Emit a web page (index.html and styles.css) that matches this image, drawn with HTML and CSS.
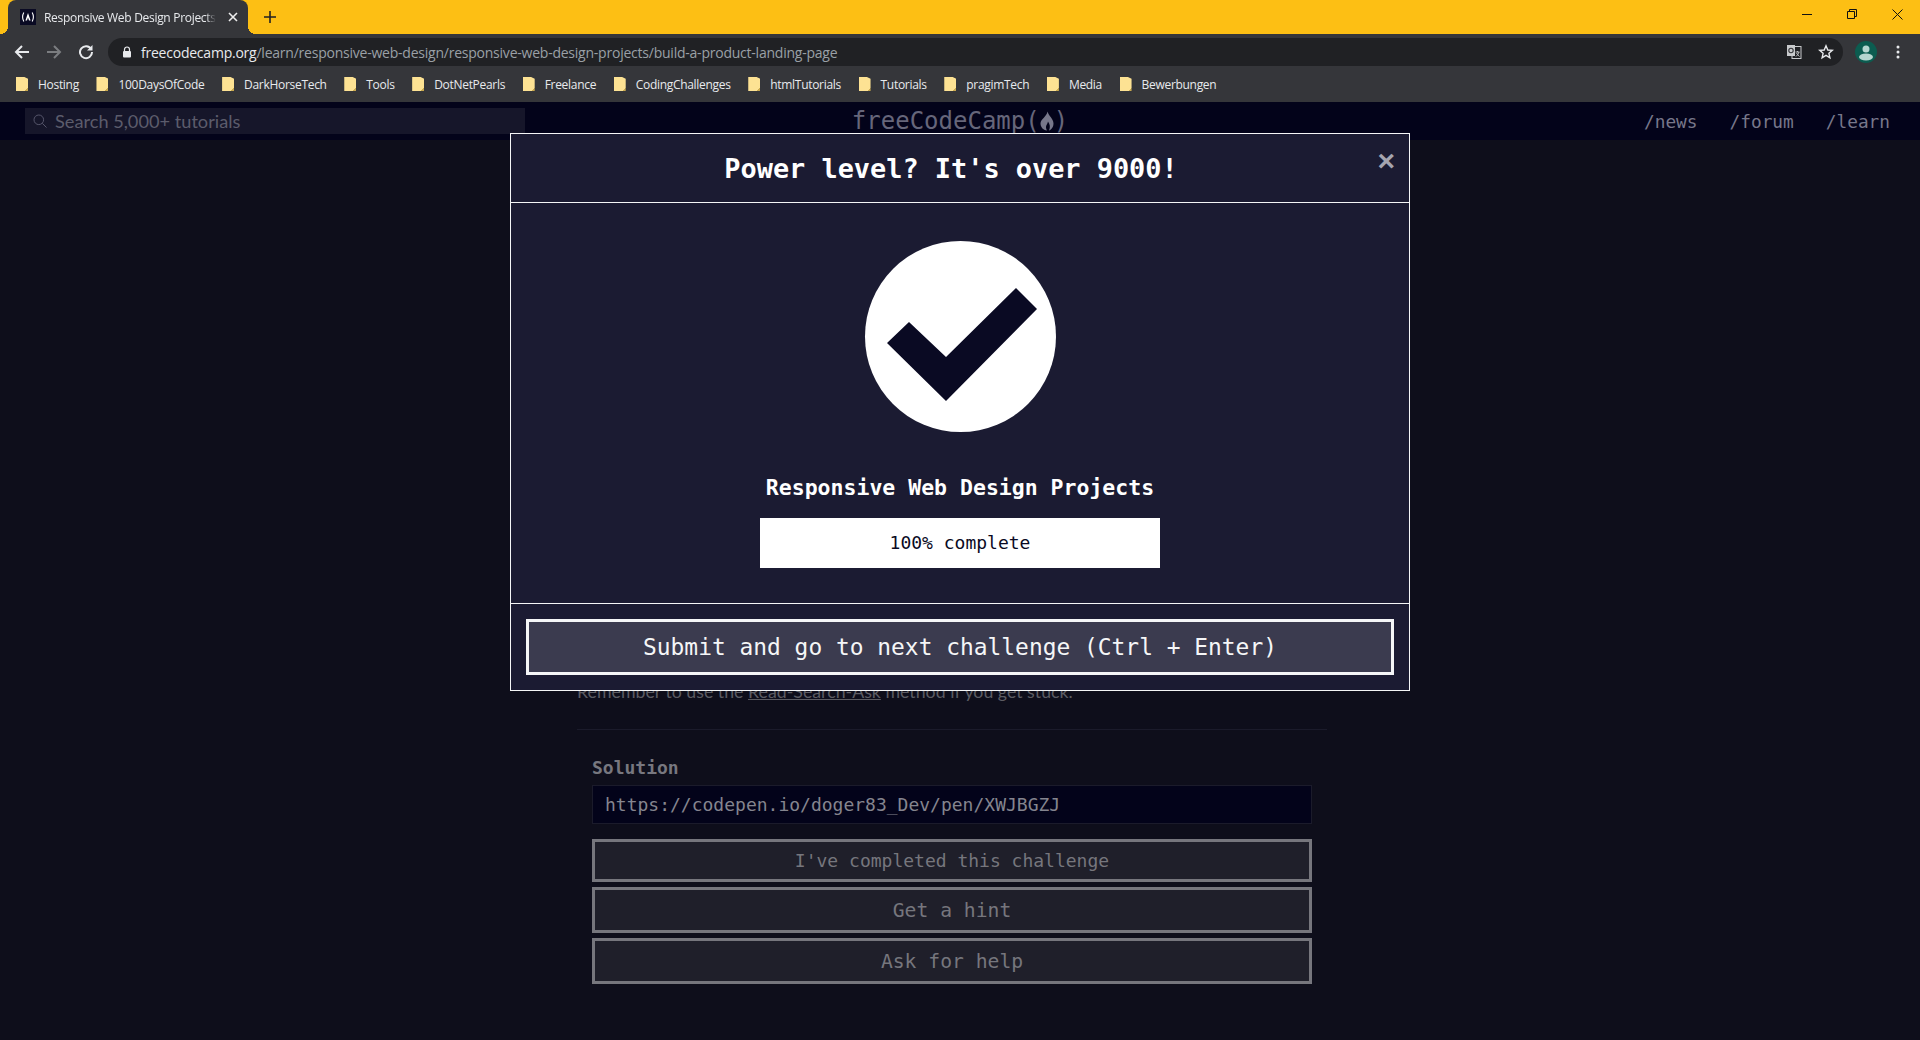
FILE: index.html
```html
<!DOCTYPE html>
<html lang="en">
<head>
    <meta charset="UTF-8">
    <meta name="viewport" content="width=device-width, initial-scale=1.0">
    <title>Responsive Web Design Projects</title>
    <link rel="stylesheet" href="styles.css">
</head>
<body>

<!-- Browser chrome -->
<div class="tabstrip">
    <div class="tab">
        <svg class="favicon" viewBox="0 0 16 16" width="16" height="16">
            <rect width="16" height="16" fill="#0a0a23"/>
            <path d="M3.800 3.500 Q1.400 8 3.800 12.500 M12.200 3.500 Q14.600 8 12.200 12.500" fill="none" stroke="#fff" stroke-width="1.100"/>
            <path d="M8 4 L10.600 11.500 L9 11.500 L8 8.500 L7 11.500 L5.400 11.500 Z" fill="#fff"/>
        </svg>
        <span class="tab-title">Responsive Web Design Projects</span>
        <svg class="tab-close" viewBox="0 0 10 10" width="10" height="10">
            <path d="M1 1 L9 9 M9 1 L1 9" stroke="#eee" stroke-width="1.600"/>
        </svg>
    </div>
    <svg class="new-tab" viewBox="0 0 12 12" width="12" height="12">
        <path d="M6 0 V12 M0 6 H12" stroke="#222" stroke-width="1.600"/>
    </svg>
    <div class="window-buttons">
        <svg viewBox="0 0 10 10" width="10" height="10"><path d="M0 5.500 H10" stroke="#111" stroke-width="1"/></svg>
        <svg viewBox="0 0 10 10" width="10" height="10"><path d="M0.500 2.500 H7.500 V9.500 H0.500 Z M2.500 2.500 V0.500 H9.500 V7.500 H7.500" fill="none" stroke="#111" stroke-width="1"/></svg>
        <svg viewBox="0 0 11 11" width="11" height="11"><path d="M0.500 0.500 L10.500 10.500 M10.500 0.500 L0.500 10.500" stroke="#111" stroke-width="1"/></svg>
    </div>
</div>

<div class="toolbar">
    <svg class="tool-icon" viewBox="0 0 16 16" width="16" height="16">
        <path d="M15 8 H2 M8 2 L2 8 L8 14" fill="none" stroke="#e8eaed" stroke-width="2"/>
    </svg>
    <svg class="tool-icon" viewBox="0 0 16 16" width="16" height="16">
        <path d="M1 8 H14 M8 2 L14 8 L8 14" fill="none" stroke="#7b7d80" stroke-width="2"/>
    </svg>
    <svg class="tool-icon" viewBox="0 0 16 16" width="16" height="16">
        <path d="M13.200 5.200 A6 6 0 1 0 14 8" fill="none" stroke="#e8eaed" stroke-width="2"/>
        <path d="M14.500 1 V6.500 H9 Z" fill="#e8eaed"/>
    </svg>
    <div class="omnibox">
        <svg class="lock" viewBox="0 0 10 12" width="10" height="12">
            <path d="M2.500 5 V3.500 A2.500 2.500 0 0 1 7.500 3.500 V5" fill="none" stroke="#e8eaed" stroke-width="1.200"/>
            <rect x="1" y="5" width="8" height="6.500" rx="1" fill="#e8eaed"/>
        </svg>
        <span class="url"><span class="url-host">freecodecamp.org</span>/learn/responsive-web-design/responsive-web-design-projects/build-a-product-landing-page</span>
        <svg class="translate" viewBox="0 0 16 16" width="16" height="16">
            <rect x="6" y="2.500" width="9" height="12" fill="#202124" stroke="#c8cacc" stroke-width="1"/>
            <rect x="1" y="1" width="8" height="11" fill="#c8cacc"/>
            <circle cx="5" cy="6.500" r="2.200" fill="none" stroke="#35363a" stroke-width="1.100"/>
            <path d="M9.500 8 H13.500 M11.500 7 V8 M13 8 Q12 11 10 12.500 M10.500 9 Q11.500 11 13.500 12.500" fill="none" stroke="#c8cacc" stroke-width="0.900"/>
        </svg>
        <svg class="star" viewBox="0 0 16 16" width="16" height="16">
            <path d="M8 1.800 L9.800 6 L14.300 6.400 L10.900 9.300 L11.900 13.800 L8 11.400 L4.100 13.800 L5.100 9.300 L1.700 6.400 L6.200 6 Z" fill="none" stroke="#e8eaed" stroke-width="1.400"/>
        </svg>
    </div>
    <svg class="avatar" viewBox="0 0 22 22" width="22" height="22">
        <circle cx="11" cy="11" r="11" fill="#0c5c50"/>
        <circle cx="11" cy="8" r="3.500" fill="#b5d5cf"/>
        <ellipse cx="11" cy="16" rx="7" ry="3.500" fill="#b5d5cf"/>
    </svg>
    <svg class="menu-dots" viewBox="0 0 4 14" width="4" height="14">
        <circle cx="2" cy="2" r="1.500" fill="#e8eaed"/>
        <circle cx="2" cy="7" r="1.500" fill="#e8eaed"/>
        <circle cx="2" cy="12" r="1.500" fill="#e8eaed"/>
    </svg>
</div>

<div class="bookmarks">
    <span class="bookmark">Hosting</span>
    <span class="bookmark">100DaysOfCode</span>
    <span class="bookmark">DarkHorseTech</span>
    <span class="bookmark">Tools</span>
    <span class="bookmark">DotNetPearls</span>
    <span class="bookmark">Freelance</span>
    <span class="bookmark">CodingChallenges</span>
    <span class="bookmark">htmlTutorials</span>
    <span class="bookmark">Tutorials</span>
    <span class="bookmark">pragimTech</span>
    <span class="bookmark">Media</span>
    <span class="bookmark">Bewerbungen</span>
</div>

<!-- Page -->
<header class="site-nav">
    <div class="search-box">
        <svg viewBox="0 0 14 14" width="14" height="14">
            <circle cx="5.800" cy="5.800" r="4.800" fill="none" stroke="#55556a" stroke-width="1"/>
            <path d="M9.300 9.300 L13.500 13.500" stroke="#55556a" stroke-width="1"/>
        </svg>
        <span>Search 5,000+ tutorials</span>
    </div>
    <div class="logo">freeCodeCamp(<svg viewBox="0 0 14 20" width="14" height="20"><path d="M7.500 0.500 C8.500 5 13.500 7.500 13.500 12.500 C13.500 16.500 11 19 9 19.500 C10.500 16 10 13.500 8 10.500 C7.500 13 6 14 6 16 C6 17.500 6.500 18.800 7 19.500 C3 19 0.500 16 0.500 12.500 C0.500 8 6.500 6 7.500 0.500 Z" fill="#77778a"/></svg>)</div>
    <nav class="nav-links">
        <span>/news</span>
        <span>/forum</span>
        <span>/learn</span>
    </nav>
</header>

<main class="content">
    <p class="instructions">Remember to use the <u>Read-Search-Ask</u> method if you get stuck.</p>
    <hr class="divider">
    <form class="solution-form">
        <label class="solution-label" for="solution">Solution</label>
        <input class="solution-input" id="solution" type="text" value="https://codepen.io/doger83_Dev/pen/XWJBGZJ">
        <button type="button" class="page-btn page-btn-first">I've completed this challenge</button>
        <button type="button" class="page-btn">Get a hint</button>
        <button type="button" class="page-btn">Ask for help</button>
    </form>
</main>

<!-- Completion modal -->
<div class="modal">
    <div class="modal-header">
        <h2>Power level? It's over 9000!</h2>
        <span class="modal-close">×</span>
    </div>
    <div class="modal-body">
        <div class="check-circle">
            <svg viewBox="0 0 191 191" width="191" height="191">
                <path d="M22 102 L44 81 L81 116 L151 47 L172 68 L81 160 Z" fill="#0a0a23"/>
            </svg>
        </div>
        <h3>Responsive Web Design Projects</h3>
        <div class="progress">100% complete</div>
    </div>
    <div class="modal-footer">
        <button type="button" class="submit-btn">Submit and go to next challenge (Ctrl + Enter)</button>
    </div>
</div>

</body>
</html>
```

FILE: styles.css
```css
/* General Reset */
* {
    margin: 0;
    padding: 0;
    box-sizing: border-box;
}

body {
    height: 1040px;
    overflow: hidden;
    background-color: #0e0e1b;
    font-family: "DejaVu Sans Mono", monospace;
}

/* Tab strip */
.tabstrip {
    height: 34px;
    background-color: #fdbf14;
    display: flex;
    align-items: flex-end;
}

.tab {
    position: relative;
    width: 240px;
    height: 34px;
    margin-left: 8px;
    padding: 0 10px 0 12px;
    background-color: #35363a;
    border-radius: 8px 8px 0 0;
    display: flex;
    align-items: center;
    gap: 8px;
}

/* curved feet of the active tab */
.tab::before,
.tab::after {
    content: "";
    position: absolute;
    bottom: 0;
    width: 8px;
    height: 8px;
}

.tab::before {
    left: -8px;
    background: radial-gradient(circle at 0 0, transparent 8px, #35363a 8px);
}

.tab::after {
    right: -8px;
    background: radial-gradient(circle at 100% 0, transparent 8px, #35363a 8px);
}

.tab-title {
    width: 172px;
    overflow: hidden;
    white-space: nowrap;
    font-family: "Open Sans", sans-serif;
    font-size: 12px;
    letter-spacing: -0.3px;
    color: #e8eaed;
    -webkit-mask-image: linear-gradient(to right, #000 94%, transparent 100%);
    mask-image: linear-gradient(to right, #000 94%, transparent 100%);
}

.tab-close {
    margin-left: 4px;
}

.new-tab {
    margin: 0 0 11px 16px;
}

.window-buttons {
    margin-left: auto;
    height: 34px;
    display: flex;
    align-items: flex-start;
    padding-top: 9px;
    padding-right: 17px;
    gap: 35px;
}

/* Toolbar */
.toolbar {
    height: 32px;
    padding: 4px 0 0 14px;
    background-color: #35363a;
    display: flex;
    align-items: center;
}

.tool-icon {
    margin-right: 16px;
}

.omnibox {
    width: 1735px;
    height: 28px;
    margin-left: -2px;
    padding: 0 14px;
    background-color: #202124;
    border-radius: 14px;
    display: flex;
    align-items: center;
}

.lock {
    margin-right: 9px;
}

.url {
    font-family: "Open Sans", sans-serif;
    font-size: 14px;
    letter-spacing: -0.23px;
    color: #9aa0a6;
    white-space: nowrap;
}

.url-host {
    color: #e8eaed;
}

.translate {
    margin-left: auto;
    margin-right: 16px;
}

.star {
    margin-right: -5px;
}

.avatar {
    margin-left: 12px;
}

.menu-dots {
    margin-left: 19px;
}

/* Bookmarks */
.bookmarks {
    height: 36px;
    background-color: #35363a;
    display: flex;
    align-items: center;
    padding-left: 16px;
    gap: 17.600px;
}

.bookmark {
    display: flex;
    align-items: center;
    gap: 10px;
    font-family: "Open Sans", sans-serif;
    font-size: 12px;
    letter-spacing: -0.3px;
    color: #e8eaed;
}

.bookmark::before {
    content: "";
    width: 12px;
    height: 14px;
    background: linear-gradient(135deg, #fde293 85%, #c9a94f 85%);
    clip-path: polygon(0 0, 70% 0, 100% 12%, 100% 100%, 0 100%);
}

/* Site nav */
.site-nav {
    height: 38px;
    padding: 0 25px;
    background-color: #03031a;
    display: grid;
    grid-template-columns: 1fr auto 1fr;
    align-items: center;
}

.search-box {
    width: 500px;
    height: 26px;
    padding-left: 8px;
    background-color: #16162a;
    display: flex;
    align-items: center;
    gap: 8px;
    font-family: Lato, sans-serif;
    font-size: 18.200px;
    color: #5c5c6c;
}

.logo {
    display: flex;
    align-items: center;
    font-size: 24px;
    color: #66667a;
}

.nav-links {
    justify-self: end;
    margin-right: 5px;
    display: flex;
    gap: 32px;
    font-size: 17.800px;
    color: #77778a;
}

/* Page content */
.content {
    width: 750px;
    margin-left: 577px;
    padding-top: 537px;
}

.instructions {
    font-family: Lato, sans-serif;
    font-size: 17.750px;
    line-height: 28px;
    color: #5c5c63;
}

.divider {
    margin-top: 24px;
    border: 0;
    border-top: 1px solid #1b1b2b;
}

.solution-form {
    padding: 26px 15px 0;
    display: flex;
    flex-direction: column;
}

.solution-label {
    font-size: 18px;
    font-weight: bold;
    line-height: 24px;
    margin-bottom: 5px;
    color: #77777f;
}

.solution-input {
    height: 39px;
    padding: 0 12px;
    background-color: #03031a;
    border: 1px solid #1b1b2b;
    font-family: "DejaVu Sans Mono", monospace;
    font-size: 18px;
    color: #85858f;
}

.page-btn {
    height: 46px;
    margin-top: 5px;
    background-color: #1f1f2a;
    border: 3px solid #76767d;
    font-family: "DejaVu Sans Mono", monospace;
    font-size: 19.700px;
    color: #76767d;
}

.page-btn-first {
    height: 43px;
    margin-top: 15px;
    font-size: 18px;
}

/* Modal */
.modal {
    position: absolute;
    top: 133px;
    left: 510px;
    width: 900px;
    height: 558px;
    background-color: #1b1b32;
    border: 1px solid #f5f6f7;
    display: flex;
    flex-direction: column;
    color: #fff;
}

.modal-header {
    height: 69px;
    padding-right: 18px;
    border-bottom: 1px solid #f5f6f7;
    display: flex;
    align-items: center;
    justify-content: center;
    position: relative;
}

.modal-header h2 {
    font-size: 26.900px;
    font-weight: bold;
}

.modal-close {
    position: absolute;
    top: 12px;
    right: 14px;
    font-family: "Liberation Sans", sans-serif;
    font-size: 30px;
    font-weight: bold;
    line-height: 30px;
    color: #a5a5b0;
}

.modal-body {
    height: 401px;
    border-bottom: 1px solid #f5f6f7;
    padding-top: 38px;
    display: flex;
    flex-direction: column;
    align-items: center;
}

.check-circle {
    width: 191px;
    height: 191px;
    border-radius: 50%;
    background-color: #fff;
}

.modal-body h3 {
    margin-top: 42px;
    font-size: 21.500px;
    font-weight: bold;
    line-height: 28px;
}

.progress {
    width: 400px;
    height: 50px;
    margin-top: 16px;
    padding-bottom: 2px;
    background-color: #fff;
    color: #0a0a23;
    font-size: 18px;
    display: flex;
    align-items: center;
    justify-content: center;
}

.modal-footer {
    flex: 1;
    padding: 15px;
}

.submit-btn {
    width: 100%;
    height: 56px;
    background-color: #3b3b4f;
    border: 3px solid #f5f6f7;
    font-family: "DejaVu Sans Mono", monospace;
    font-size: 22.900px;
    color: #f5f6f7;
}
```
